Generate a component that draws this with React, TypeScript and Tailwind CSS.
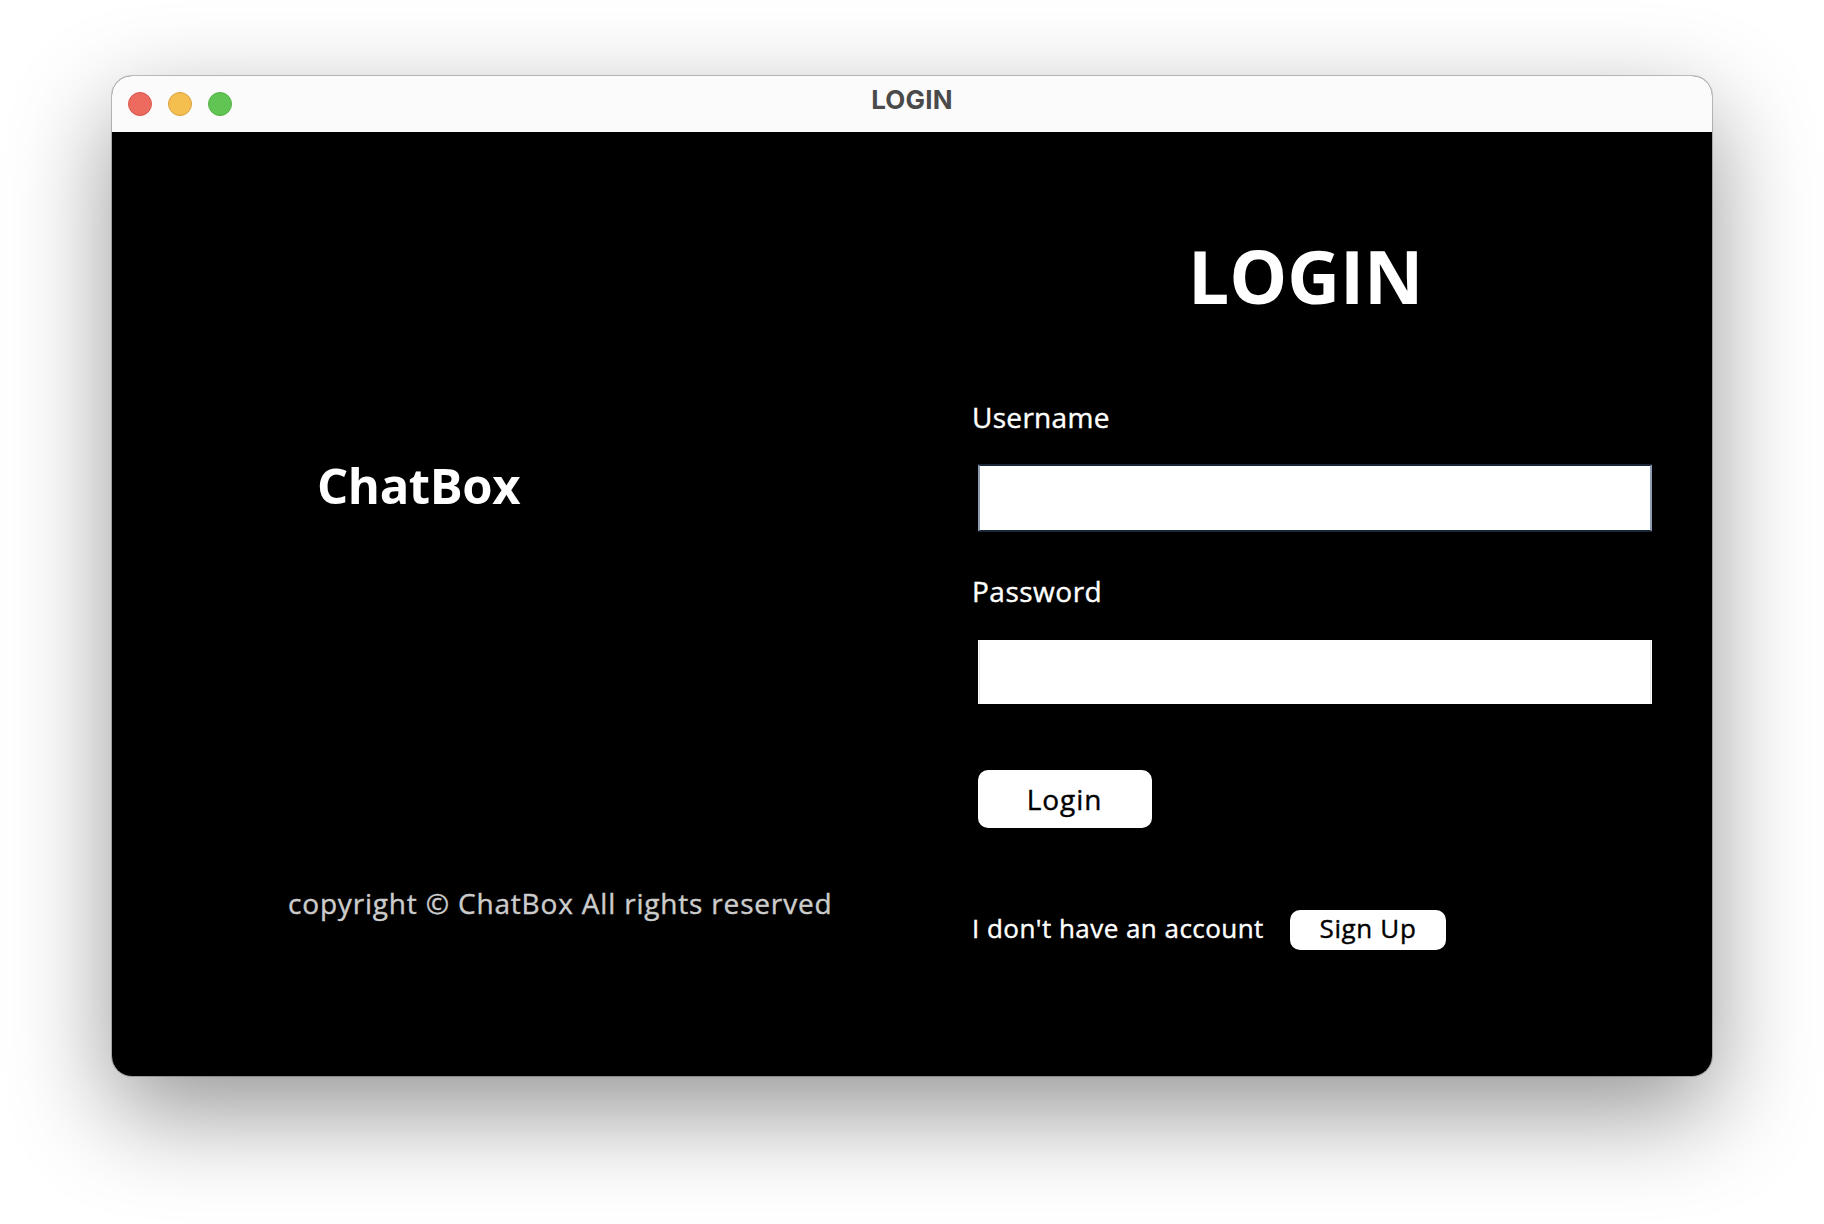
const lights = [
  'bg-[#ec6a5e] border-[#d8564c]',
  'bg-[#f4bf4f] border-[#d9a23d]',
  'bg-[#61c554] border-[#55ae46]',
];

function TitleBar() {
  return (
    <header className="grid h-14 shrink-0 grid-cols-[1fr_auto_1fr] bg-[#fbfbfb] px-4">
      <div className="flex gap-4 pt-4">
        {lights.map((c) => (
          <span key={c} className={`size-6 rounded-full border ${c}`} />
        ))}
      </div>
      <div className="pt-2 font-['Inter'] text-[26px] leading-8 font-bold tracking-[0.2px] text-[#4a4a4a]">LOGIN</div>
    </header>
  );
}

function Brand() {
  return (
    <section className="flex w-[862px] flex-col items-start">
      <h2 className="mt-[323px] ml-[205px] text-[49px] leading-[60px] font-bold tracking-[-0.4px]">ChatBox</h2>
      <p className="mt-[368px] ml-[176px] text-[28px] leading-10 tracking-[0.82px] text-[#cccccc] [-webkit-text-stroke:0.4px]">
        copyright © ChatBox All rights reserved
      </p>
    </section>
  );
}

function LoginForm() {
  return (
    <form className="flex w-[678px] flex-col items-start [-webkit-text-stroke:0.4px]">
      <h1 className="mt-[104px] ml-[214px] text-[73px] leading-[80px] font-bold tracking-[-0.1px] [-webkit-text-stroke:0px]">LOGIN</h1>
      <label className="mt-[81px] -ml-0.5 text-[28px] leading-10 tracking-[0.3px]">Username</label>
      <input
        className="mt-[27px] ml-1 h-[68px] w-[674px] rounded-[2px] border-2 border-x-[#8e9bb4] border-y-[#1b2636] bg-white px-3 text-black outline-none"
      />
      <label className="mt-[39px] -ml-0.5 text-[28px] leading-10 tracking-[0.5px]">Password</label>
      <input
        type="password"
        className="mt-[29px] ml-1 h-16 w-[674px] bg-white px-3 text-black shadow-[inset_1px_0_0_#ffffff,inset_-1px_0_0_#ffffff,inset_2px_0_0_#e5e5e5,inset_-2px_0_0_#e5e5e5] outline-none"
      />
      <button
        type="button"
        className="mt-[66px] ml-1 h-[58px] w-[174px] rounded-[10px] bg-white pr-px pb-px text-[28px] leading-10 tracking-[0.9px] text-black [-webkit-text-stroke:0.4px]"
      >
        Login
      </button>
      <div className="mt-[82px] flex h-10 items-start">
        <span className="-ml-0.5 w-[318px] text-[26px] leading-9 whitespace-nowrap tracking-[0.46px]">I don't have an account</span>
        <button
          type="button"
          className="h-10 w-[156px] rounded-[10px] bg-white pb-1 text-[26px] leading-9 tracking-[0.65px] text-black [-webkit-text-stroke:0.4px]"
        >
          Sign Up
        </button>
      </div>
    </form>
  );
}

export default function App() {
  return (
    <div className="flex h-[1224px] w-[1824px] items-start justify-center overflow-hidden bg-white pt-[76px] font-['Open_Sans','Noto_Sans',sans-serif]">
      <div className="h-[1000px] w-[1600px] rounded-[20px] shadow-[0_0_0_1px_rgba(0,0,0,0.22),0_36px_100px_rgba(0,0,0,0.42)]">
        <div className="flex h-full w-full flex-col overflow-hidden rounded-[20px] bg-black">
          <TitleBar />
          <main className="flex flex-1 text-white">
            <Brand />
            <LoginForm />
          </main>
        </div>
      </div>
    </div>
  );
}
